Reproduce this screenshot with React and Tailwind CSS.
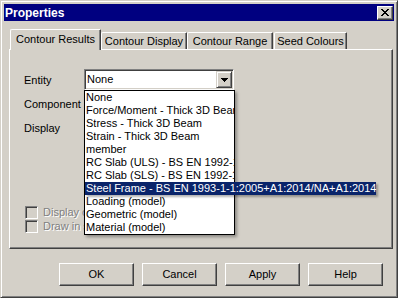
const raised =
  "border border-t-white border-l-white border-r-[#404040] border-b-[#404040] shadow-[inset_-1px_-1px_0_#808080]";
const sunken =
  "border border-t-[#808080] border-l-[#808080] border-r-white border-b-white shadow-[inset_1px_1px_0_#404040,inset_-1px_-1px_0_#d4d0c8]";

const items = [
  "None",
  "Force/Moment - Thick 3D Beam",
  "Stress - Thick 3D Beam",
  "Strain - Thick 3D Beam",
  "member",
  "RC Slab (ULS) - BS EN 1992-1-1:2004",
  "RC Slab (SLS) - BS EN 1992-1-1:2004",
  "Steel Frame - BS EN 1993-1-1:2005+A1:2014/NA+A1:2014",
  "Loading (model)",
  "Geometric (model)",
  "Material (model)",
];

const Tab = ({ label, active, className = "" }) => (
  <div
    className={`flex items-center justify-center bg-[#d4d0c8] border-t border-l border-r border-t-white border-l-white border-r-[#404040] shadow-[inset_-1px_0_0_#808080] rounded-tl-[2px] rounded-tr-[1px] ${
      active ? "h-[21px] -mb-[1px] relative z-10 pb-[2px]" : "h-[17px]"
    } ${className}`}
  >
    {label}
  </div>
);

const Check = ({ label }) => (
  <div className="flex items-center h-[13px]">
    <div className={`w-[13px] h-[13px] ml-[1px] bg-[#d4d0c8] ${sunken}`} />
    <span className="ml-[5px] text-[#808080] [text-shadow:1px_1px_0_#fff] whitespace-nowrap">
      {label}
    </span>
  </div>
);

const Button = ({ label }) => (
  <button
    className={`w-[75px] h-[23px] bg-[#d4d0c8] text-black ${raised} shadow-[inset_-1px_-1px_0_#808080] flex items-center justify-center`}
  >
    {label}
  </button>
);

export default function App() {
  return (
    <div className="w-[398px] h-[298px] bg-[#d4d0c8] text-[11px] text-black font-['Liberation_Sans',Arial,sans-serif] select-none">
      <div className="w-full h-full p-[3px] border border-[#d4d0c8] border-r-[#404040] border-b-[#404040] shadow-[inset_1px_1px_0_#fff,inset_-1px_-1px_0_#808080]">
        {/* title bar */}
        <div className="h-[17px] bg-[#000080] flex items-center justify-between pl-[1px] pr-[1px]">
          <span className="text-white font-bold text-[12px] leading-none">Properties</span>
          <div className={`w-[16px] h-[14px] bg-[#d4d0c8] ${raised} flex items-center justify-center`}>
            <svg width="8" height="7" viewBox="0 0 8 7" shapeRendering="crispEdges">
              <path d="M0 0h2v1h1v1h2v-1h1v-1h2v1h-1v1h-1v1h-1v1h1v1h1v1h1v1h-2v-1h-1v-1h-2v1h-1v1h-2v-1h1v-1h1v-1h1v-1h-1v-1h-1v-1h-1z" fill="#000" />
            </svg>
          </div>
        </div>

        {/* tabs */}
        <div className="mt-[8px] flex items-end h-[20px] pl-[6px]">
          <Tab label="Contour Results" active className="w-[91px]" />
          <Tab label="Contour Display" className="w-[86px] pt-[1px]" />
          <Tab label="Contour Range" className="w-[86px] pt-[1px]" />
          <Tab label="Seed Colours" className="w-[73px] ml-[1px] pt-[1px]" />
        </div>

        {/* tab panel */}
        <div className={`ml-[5px] w-[384px] h-[200px] ${raised} pl-[14px] pt-[19px]`}>
          <div className="flex flex-col gap-[3px]">
            <div className="flex items-center h-[21px]">
              <span className="w-[60px] pt-[2px]">Entity</span>
              <div className="relative z-20">
                <div className={`w-[150px] h-[21px] bg-white ${sunken} flex items-center justify-between pl-[2px] pr-[1px]`}>
                  <span>None</span>
                  <div className={`w-[16px] h-[17px] bg-[#d4d0c8] border border-t-[#d4d0c8] border-l-[#d4d0c8] border-r-[#404040] border-b-[#404040] shadow-[inset_1px_1px_0_#fff,inset_-1px_-1px_0_#808080] flex items-center justify-center`}>
                    <svg width="7" height="4" viewBox="0 0 7 4" shapeRendering="crispEdges">
                      <path d="M0 0h7v1h-1v1h-1v1h-1v1h-1v-1h-1v-1h-1v-1h-1z" fill="#000" />
                    </svg>
                  </div>
                </div>
                {/* open dropdown list */}
                <div className="absolute left-0 top-full w-[151px] bg-white border border-black shadow-[2px_2px_3px_rgba(0,0,0,0.35)]">
                  {items.map((it, i) =>
                    i === 7 ? (
                      <div
                        key={it}
                        className="h-[13px] leading-[13px] w-[291px] pl-[1px] bg-[#0a246a] text-white whitespace-nowrap shadow-[2px_2px_2px_rgba(0,0,0,0.3)]"
                      >
                        {it}
                      </div>
                    ) : (
                      <div key={it} className="h-[13px] leading-[13px] pl-[1px] whitespace-nowrap overflow-hidden">
                        {it}
                      </div>
                    )
                  )}
                </div>
              </div>
            </div>
            <div className="flex items-center h-[21px]">
              <span className="pt-[2px]">Component</span>
            </div>
            <div className="flex items-center h-[21px]">
              <span className="pt-[2px]">Display</span>
            </div>
          </div>

          <div className="mt-[68px] flex flex-col gap-[1px]">
            <Check label="Display contour values" />
            <Check label="Draw in screen space" />
          </div>
        </div>

        {/* buttons */}
        <div className="mt-[14px] flex justify-end gap-[8px] pr-[11px]">
          <Button label="OK" />
          <Button label="Cancel" />
          <Button label="Apply" />
          <Button label="Help" />
        </div>
      </div>
    </div>
  );
}
